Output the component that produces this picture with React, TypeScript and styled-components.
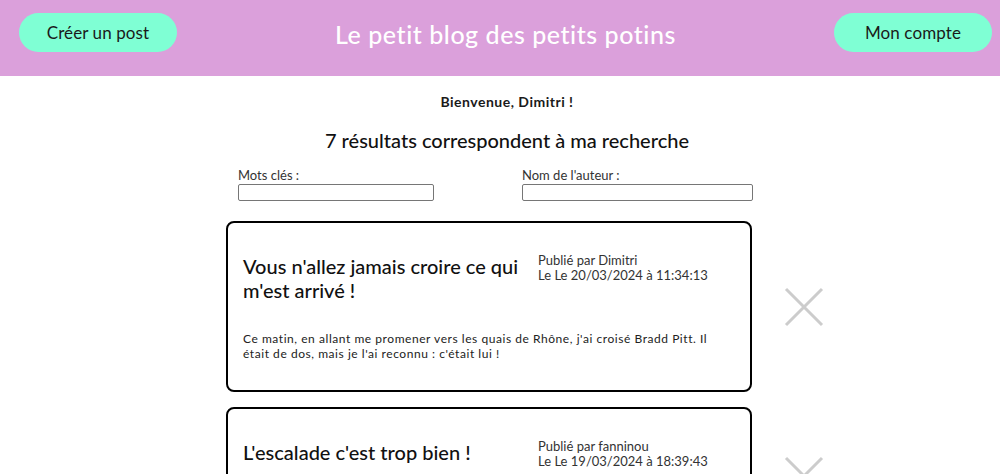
import React from "react";
import styled, { createGlobalStyle } from "styled-components";

const Global = createGlobalStyle`
  html, body { margin: 0; padding: 0; background: #ffffff; }
  body { font-family: Lato, "Noto Sans", sans-serif; color: #111; }
  * { box-sizing: border-box; }
`;

const Header = styled.header`
  height: 76px;
  background: #dba0db;
  display: flex;
  align-items: flex-start;
  justify-content: space-between;
  padding: 13px 8px 0 19px;
`;

const PillButton = styled.button`
  width: 158px;
  height: 39px;
  border: none;
  border-radius: 20px;
  background: #7fffd4;
  color: #1a1a1a;
  font-family: inherit;
  font-size: 17px;
  letter-spacing: 0.1px;
  cursor: pointer;
`;

const SiteTitle = styled.h1`
  margin: 6px 0 0;
  color: #ffffff;
  font-size: 25px;
  font-weight: 500;
  letter-spacing: 0.55px;
`;

const Main = styled.main`
  display: flex;
  flex-direction: column;
  align-items: center;
`;

const Welcome = styled.p`
  margin: 17px 0 0 14px;
  font-size: 14px;
  font-weight: 700;
  letter-spacing: 0.5px;
  line-height: 18px;
  color: #1a1a1a;
`;

const Results = styled.h2`
  margin: 17px 0 0 14px;
  font-size: 20px;
  font-weight: 500;
  line-height: 24px;
`;

const SearchRow = styled.div`
  width: 515px;
  margin: 16px 0 0 -9px;
  display: flex;
  justify-content: space-between;
`;

const Field = styled.label<{ $w: number }>`
  display: flex;
  flex-direction: column;
  width: ${(p) => p.$w}px;
  font-size: 13px;
  color: #333;
  line-height: 15px;
`;

const Input = styled.input`
  margin-top: 1px;
  height: 17px;
  border: 1px solid #767676;
  border-radius: 2px;
  padding: 0 3px;
`;

const PostRow = styled.div<{ $first: boolean }>`
  display: flex;
  align-items: center;
  gap: 32px;
  margin: ${(p) => (p.$first ? 20 : 15)}px 0 0 50px;
`;

const Card = styled.article`
  width: 526px;
  border: 2px solid #000;
  border-radius: 8px;
  padding: 0 15px 29px;
  background: #fff;
`;

const CardHead = styled.div`
  display: flex;
  align-items: flex-start;
  gap: 14px;
`;

const PostTitle = styled.h3`
  width: 281px;
  margin: 31px 0 0;
  font-size: 20px;
  font-weight: 500;
  line-height: 24px;
`;

const Meta = styled.div`
  margin-top: 30px;
  font-size: 13px;
  line-height: 15px;
  color: #333;
`;

const Body = styled.p`
  margin: 29px 0 0;
  font-size: 12px;
  line-height: 15px;
  letter-spacing: 0.55px;
  color: #222;
  max-width: 476px;
`;

const Close = styled.button`
  width: 40px;
  height: 40px;
  padding: 0;
  border: none;
  background: none;
  cursor: pointer;
  display: flex;
`;

type Post = { title: string; author: string; date: string; body?: string };

const posts: Post[] = [
  {
    title: "Vous n'allez jamais croire ce qui m'est arrivé !",
    author: "Dimitri",
    date: "20/03/2024 à 11:34:13",
    body:
      "Ce matin, en allant me promener vers les quais de Rhône, j'ai croisé Bradd Pitt. Il était de dos, mais je l'ai reconnu : c'était lui !",
  },
  {
    title: "L'escalade c'est trop bien !",
    author: "fanninou",
    date: "19/03/2024 à 18:39:43",
    body: "J'ai essayé l'escalade en salle ce week-end, et j'ai adoré !",
  },
];

export default function App() {
  return (
    <>
      <Global />
      <Header>
        <PillButton>Créer un post</PillButton>
        <SiteTitle>Le petit blog des petits potins</SiteTitle>
        <PillButton>Mon compte</PillButton>
      </Header>
      <Main>
        <Welcome>Bienvenue, Dimitri !</Welcome>
        <Results>7 résultats correspondent à ma recherche</Results>
        <SearchRow>
          <Field $w={196}>
            Mots clés :
            <Input type="text" />
          </Field>
          <Field $w={231}>
            Nom de l'auteur :
            <Input type="text" />
          </Field>
        </SearchRow>
        {posts.map((p, i) => (
          <PostRow key={i} $first={i === 0}>
            <Card>
              <CardHead>
                <PostTitle>{p.title}</PostTitle>
                <Meta>
                  Publié par {p.author}
                  <br />
                  Le Le {p.date}
                </Meta>
              </CardHead>
              {p.body && <Body>{p.body}</Body>}
            </Card>
            <Close aria-label="Supprimer">
              <svg width="40" height="40" viewBox="0 0 40 40">
                <path d="M2 2 L38 38 M38 2 L2 38" stroke="#cccccc" strokeWidth="3" />
              </svg>
            </Close>
          </PostRow>
        ))}
      </Main>
    </>
  );
}
